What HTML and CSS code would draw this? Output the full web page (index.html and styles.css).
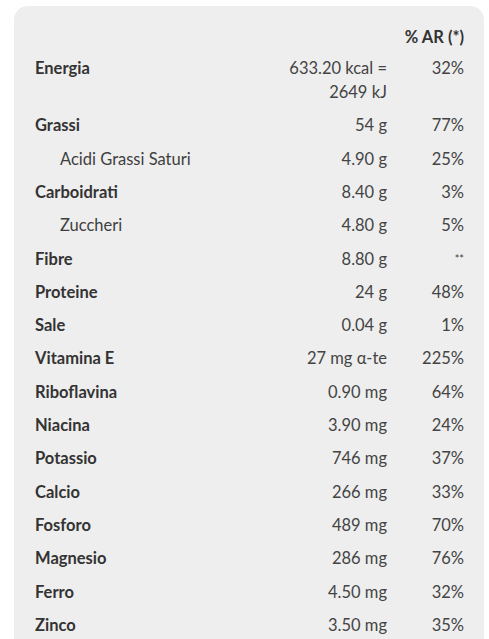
FILE: index.html
```html
<!DOCTYPE html>
<html lang="it">
<head>
<meta charset="utf-8">
<link rel="stylesheet" href="styles.css">
</head>
<body>
<div class="card">
  <table class="nutri">
    <thead>
      <tr class="head"><th></th><th></th><th class="pct">% AR (*)</th></tr>
    </thead>
    <tbody>
      <tr><td class="lbl">Energia</td><td class="val">633.20 kcal =<br>2649 kJ</td><td class="pct">32%</td></tr>
      <tr><td class="lbl">Grassi</td><td class="val">54 g</td><td class="pct">77%</td></tr>
      <tr><td class="lbl sub">Acidi Grassi Saturi</td><td class="val">4.90 g</td><td class="pct">25%</td></tr>
      <tr><td class="lbl">Carboidrati</td><td class="val">8.40 g</td><td class="pct">3%</td></tr>
      <tr><td class="lbl sub">Zuccheri</td><td class="val">4.80 g</td><td class="pct">5%</td></tr>
      <tr><td class="lbl">Fibre</td><td class="val">8.80 g</td><td class="pct"><span class="stars">**</span></td></tr>
      <tr><td class="lbl">Proteine</td><td class="val">24 g</td><td class="pct">48%</td></tr>
      <tr><td class="lbl">Sale</td><td class="val">0.04 g</td><td class="pct">1%</td></tr>
      <tr><td class="lbl">Vitamina E</td><td class="val">27 mg α-te</td><td class="pct">225%</td></tr>
      <tr><td class="lbl">Riboflavina</td><td class="val">0.90 mg</td><td class="pct">64%</td></tr>
      <tr><td class="lbl">Niacina</td><td class="val">3.90 mg</td><td class="pct">24%</td></tr>
      <tr><td class="lbl">Potassio</td><td class="val">746 mg</td><td class="pct">37%</td></tr>
      <tr><td class="lbl">Calcio</td><td class="val">266 mg</td><td class="pct">33%</td></tr>
      <tr><td class="lbl">Fosforo</td><td class="val">489 mg</td><td class="pct">70%</td></tr>
      <tr><td class="lbl">Magnesio</td><td class="val">286 mg</td><td class="pct">76%</td></tr>
      <tr><td class="lbl">Ferro</td><td class="val">4.50 mg</td><td class="pct">32%</td></tr>
      <tr><td class="lbl">Zinco</td><td class="val">3.50 mg</td><td class="pct">35%</td></tr>
    </tbody>
  </table>
</div>
</body>
</html>
```
FILE: styles.css
```css
html, body {
  margin: 0;
  padding: 0;
  background: #ffffff;
}
body {
  padding: 6px 5px 0 14px;
  font-family: Lato, "Liberation Sans", sans-serif;
  font-size: 16.5px;
  color: #3a3a3a;
}
.card {
  background: #eeeeee;
  border-radius: 14px;
  padding: 12px 20px 40px 21px;
  min-height: 700px;
}
.nutri {
  width: 100%;
  border-collapse: collapse;
}
.nutri th, .nutri td {
  padding: 4.67px 0;
  line-height: 24px;
  vertical-align: top;
}
.head th {
  padding: 7px 0 2.33px;
  font-weight: 700;
  color: #333333;
}
.lbl {
  text-align: left;
  font-weight: 700;
  color: #333333;
}
.lbl.sub {
  font-weight: 400;
  padding-left: 25px;
  color: #3f3f3f;
}
.val {
  text-align: right;
  color: #444444;
}
.pct {
  text-align: right;
  width: 77px;
  color: #444444;
}
.stars {
  font-size: 11px;
  vertical-align: top;
}
```
